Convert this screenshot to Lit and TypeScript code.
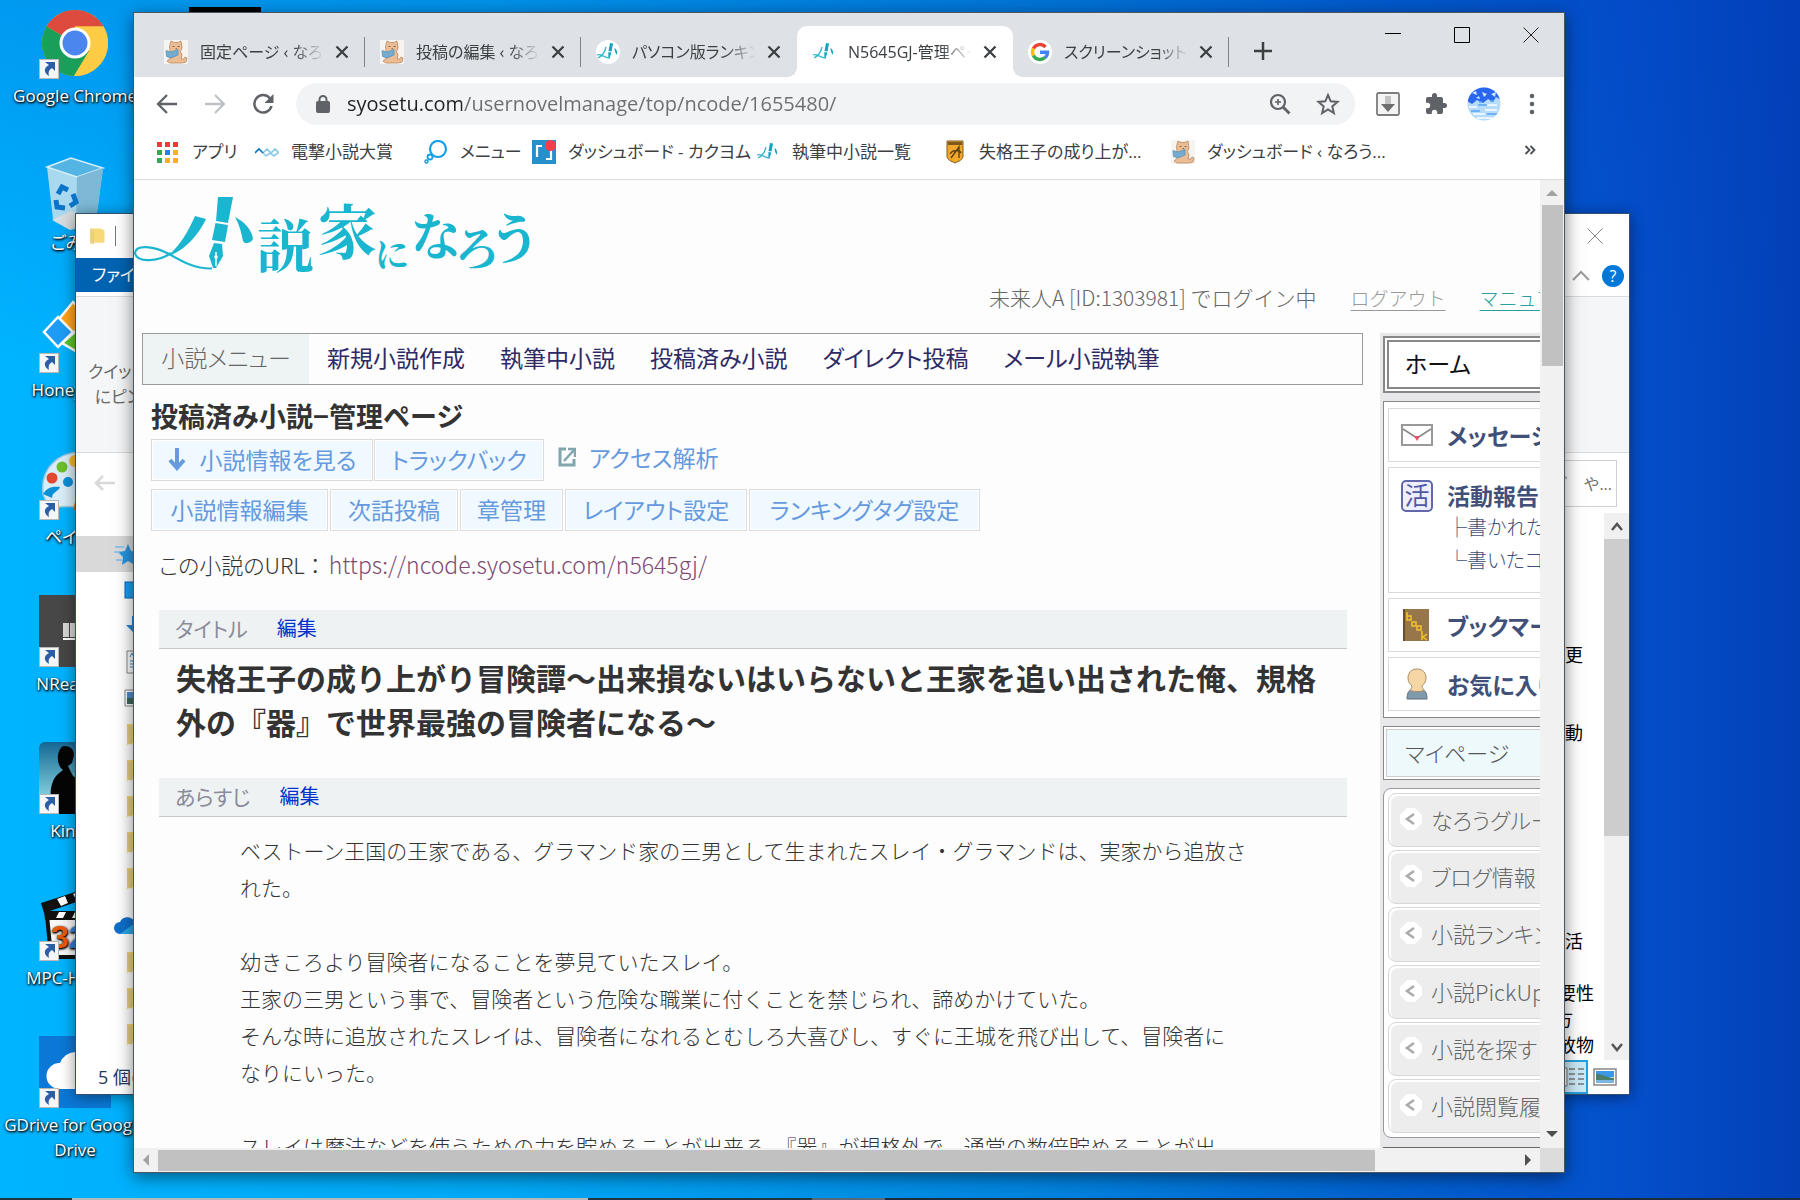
import { LitElement, html, svg, css } from "lit";
import { customElement } from "lit/decorators.js";

/* ---------- shared drawings ---------- */

const cat = () => html`<svg class="fav" viewBox="0 0 24 24" aria-hidden="true">
  <rect width="24" height="24" fill="#f6f4f1"/>
  <path d="M7 1l3 1.500h4L17 1l1 7-1.500 3.500L18 15l-1 4h3l1-2 2 1-1 4-4 1H6l-3-2 3-2.500-1-4 1-4-.5-4z" fill="#ebbd95" stroke="#b98862" stroke-width=".8"/>
  <path d="M8.500 6.500h2M13.500 6.500h2M11.500 8.500h1.500" stroke="#8a5c3c" stroke-width=".9"/>
  <path d="M2 10.500l5 1.500 7-2.500v5.500l-7 3-4.500-1.500z" fill="#76abd0" stroke="#4f8fbb" stroke-width=".7"/>
</svg>`;

const pen = (disc: boolean) => html`<svg class="fav" viewBox="0 0 24 24" aria-hidden="true">
  ${disc ? svg`<circle cx="12" cy="12" r="12" fill="#fff"/>` : ""}
  <path d="M14 3l3 .6-1.500 8-3-.5z" fill="#12a5bd"/><path d="M12.400 12l3 .5-1.300 4-1.700 2z" fill="#12a5bd"/>
  <path d="M10 7c-1 5-4 9-8 11M1 15c3-2 8 3 13 3" fill="none" stroke="#38b6c8" stroke-width="1.300"/>
  <path d="M18.500 8c2 1 3 3.500 2.500 7-1.500-2-2.500-4-2.500-7z" fill="#12a5bd"/>
</svg>`;

const google = () => html`<svg class="fav" viewBox="0 0 24 24" aria-hidden="true">
  <circle cx="12" cy="12" r="12" fill="#fff"/>
  <g fill="none" stroke-width="3.400"><path d="M5.400 8.500A7.500 7.500 0 0 1 17.500 7" stroke="#ea4335"/>
  <path d="M5.400 15.500a7.500 7.500 0 0 1 0-7" stroke="#fbbc05"/><path d="M17 17.600A7.500 7.500 0 0 1 5.400 15.500" stroke="#34a853"/>
  <path d="M12 12.200h7.500c0 2.300-1 4.200-2.500 5.400" stroke="#4285f4"/></g>
</svg>`;

const folder = () => html`<svg class="mini" viewBox="0 0 24 24" aria-hidden="true">
  <path d="M3 2h14l5 3v16H8l-5 2z" fill="#f8d978"/><path d="M3 2l5 3v18l-5-3z" fill="#e8cf85"/>
</svg>`;

const chromeLogo = svg`<circle cx="36" cy="36" r="33" fill="#fbc93d"/>
  <path d="M36 36L7.400 19.500A33 33 0 0 1 64.600 19.500H36z" fill="#dd4b3e"/>
  <path d="M36 36L7.400 19.500A33 33 0 0 0 35 69l15-25z" fill="#199f5a"/>
  <path d="M36 19.500h28.600A33 33 0 0 1 35 69l15.300-25z" fill="#fdcc44"/>
  <circle cx="36" cy="36" r="15.500" fill="#fff"/><circle cx="36" cy="36" r="12.500" fill="#4a86ee"/>`;

const binIcon = svg`<path d="M8 13l24-9 32 10-7 52-26 6-17-7z" fill="#a9d9ee"/>
  <path d="M8 13l24-9 32 10-26 9z" fill="#54b4e4" stroke="#d5eef8" stroke-width="1.500"/>
  <path d="M38 23l26-9-7 52-20 5z" fill="#7db9d6"/><path d="M13 66l19-9 26 8-1 5-26 6z" fill="#d8dde0"/>
  <g fill="none" stroke="#0a74c9" stroke-width="5"><path d="M19 40l4-7 6 3"/><path d="M34 40l3 8-6 4"/><path d="M26 54l-8-1-1-7"/></g>`;

const honey = svg`<g stroke="#fff" stroke-width="2.500"><path d="M34 1l17 17-17 17-14-17z" fill="#ffa21a"/>
  <path d="M19 16l15 15-15 15L5 31z" fill="#1e9cf5"/><path d="M37 30l14-14 14 15-15 27-27-16z" fill="#5cc42c"/></g>`;

const paint = svg`<path d="M4 46C1 20 20 4 42 4c18 0 28 14 28 28 0 18-14 28-32 27-16-1-14 0-20 0C8 58 6 52 4 46z" fill="#d9edf8" stroke="#9ec7de" stroke-width="1.500"/>
  <circle cx="13" cy="30" r="5.500" fill="#e2482f"/><circle cx="23" cy="19" r="5.500" fill="#6abf2d"/><circle cx="36" cy="13" r="6" fill="#f4b92c"/>
  <path d="M4 46c4-6 8-8 17-7-2 5-8 5-8 11" fill="#0b8fd8"/><circle cx="29" cy="34" r="5" fill="#0b8fd8"/><path d="M34 62l5-20 5 1-4 19z" fill="#c8742a"/>`;

const reader = svg`<rect width="72" height="72" fill="#474747"/><path d="M24 28h6v14h-6zM31 28h6v14h-6zM38 28h6v14h-6z" fill="#d8d8d8"/><path d="M24 43h26v2H24z" fill="#fff"/>`;

const kindle = svg`<defs><linearGradient id="kg" x1="0" y1="0" x2="0" y2="1"><stop offset="0" stop-color="#146793"/><stop offset="1" stop-color="#a6f0f4"/></linearGradient></defs>
  <rect width="72" height="72" rx="6" fill="url(#kg)"/>
  <path d="M25 4c7 0 10 4 10 9l-2 8-4 3 5 10 12 8 8-6 4 10-8 6v20H9l4-12c-3-8-1-22 6-28l5-4c-8-6-6-22 1-24z" fill="#050505"/>`;

const mpc = svg`<path d="M8 26h56v42H12z" fill="#f7f7f7" stroke="#111" stroke-width="4"/>
  <path d="M2 14L58-4l3 9L5 24z" fill="#111"/><path d="M5 22h60v9H6z" fill="#111"/>
  <path d="M18 10l8-3 3 7-7 3zM34 5l8-3 3 7-7 3zM20 23h7l-3 6h-7zM36 23h7l-3 6h-7z" fill="#fff"/>
  <text x="12" y="59" font-size="32" font-weight="bold" font-family="Liberation Sans, sans-serif" fill="#e8590c">3<tspan fill="#2f7fd6">2</tspan></text>`;

const gdrive = svg`<rect width="72" height="72" fill="#0b78d7"/>
  <path d="M20 52a13 13 0 0 1 1-26 17 17 0 0 1 31-2 14 14 0 0 1 4 28z" transform="translate(0 1)" fill="#fff"/><circle cx="46" cy="38" r="10" fill="#0b78d7"/>`;

const shortcuts = [
  { art: chromeLogo, label: "Google Chrome", link: true },
  { art: binIcon, label: "ごみ箱", link: false },
  { art: honey, label: "Honeyview", link: true },
  { art: paint, label: "ペイント", link: true },
  { art: reader, label: "NReaders", link: true },
  { art: kindle, label: "Kindle", link: true },
  { art: mpc, label: "MPC-HC x64", link: true },
  { art: gdrive, label: "GDrive for Google Drive", link: true },
];

/* ---------- file explorer ---------- */

@customElement("explorer-window")
export class ExplorerWindow extends LitElement {
  static styles = css`
    :host { display: flex; flex-direction: column; background: #fff; color: #000; box-sizing: border-box;
      border: 1px solid #35506e; box-shadow: 0 2px 14px rgba(0,0,0,.45); overflow: hidden;
      font: 18px/26px "Open Sans", "Noto Sans CJK JP", sans-serif; }
    button { border: 0; background: none; padding: 0; font: inherit; color: inherit; display: flex; align-items: center; justify-content: center; }
    .row { display: flex; align-items: center; flex: none; box-sizing: border-box; }
    .title { height: 44px; padding: 0 26px 0 12px; }
    .title .mini { width: 18px; height: 24px; }
    .bar { width: 1px; height: 20px; background: #777; margin-left: 9px; }
    .push { margin-left: auto; }
    .tabs { height: 39px; align-items: flex-start; border-bottom: 1px solid #d9dadb; padding-right: 5px; }
    .file { background: #0063b1; color: #fff; height: 34px; width: 90px; padding-left: 16px; justify-content: flex-start; font-size: 17px; font-feature-settings: "palt"; white-space: nowrap; }
    .tabs .push { display: flex; gap: 10px; padding-top: 7px; }
    .ribbon { height: 156px; background: #f5f6f7; border-bottom: 1px solid #d9dadb; color: #6a6a6a; font-size: 17px; line-height: 25px; box-sizing: border-box; padding: 62px 0 0 12px; font-feature-settings: "palt"; white-space: nowrap; flex: none; }
    .ribbon span { display: inline-block; text-align: center; }
    .address { height: 60px; padding: 0 12px 0 17px; }
    .search { width: 300px; height: 47px; box-sizing: border-box; border: 1px solid #d0d0d0; color: #6d6d6d; font: inherit; font-size: 16px; text-align: right; padding: 0 4px; }
    .body { flex: 1; display: flex; min-height: 0; }
    nav { width: 240px; padding-top: 23px; display: flex; flex-direction: column; overflow: hidden; }
    .item { height: 36px; display: flex; align-items: center; padding-left: 48px; flex: none; }
    .item.root { padding-left: 38px; }
    .item.on { background: #d9d9d9; }
    .item.gap { margin-top: 12px; }
    .mini { width: 24px; height: 24px; flex: none; }
    .files { flex: 1; display: flex; flex-direction: column; align-items: flex-end; overflow: hidden; padding-top: 129px; font-size: 18px; line-height: 26px; }
    .files p { margin: 0 21px 52px 0; }
    .files p.far { margin-bottom: 26px; margin-top: 130px; }
    .files p.tight { margin: 0 10px 0 0; }
    .files p.mid { margin: 0 31px 0 0; }
    .scroll { width: 25px; background: #f0f0f0; display: flex; flex-direction: column; align-items: center; }
    .scroll svg { width: 24px; height: 26px; flex: none; }
    .thumb { width: 100%; height: 297px; background: #cdcdcd; }
    .scroll svg:last-child { margin-top: auto; }
    .status { height: 34px; padding: 0 12px 0 22px; color: #1e395b; gap: 5px; }
    .view { width: 46px; height: 34px; box-sizing: border-box; border: 2px solid #26a0da; background: #cbe8f6; }
    .pic { width: 24px; height: 20px; }
  `;
  render() {
    return html`
      <div class="row title">${folder()}<span class="bar"></span>
        <button class="push" aria-label="閉じる"><svg width="16" height="16" viewBox="0 0 16 16"><path d="M.5.5l15 15M15.500.5l-15 15" stroke="#888" fill="none"/></svg></button></div>
      <div class="row tabs"><button class="file">ファイル</button>
        <div class="push"><button aria-label="リボンの最小化"><svg width="22" height="22" viewBox="0 0 22 22"><path d="M3 15l8-8 8 8" fill="none" stroke="#9a9a9a" stroke-width="2"/></svg></button>
        <button aria-label="ヘルプ"><svg width="22" height="22" viewBox="0 0 22 22"><circle cx="11" cy="11" r="11" fill="#0078d7"/><text x="11" y="17" fill="#fff" font-size="16" text-anchor="middle" font-family="Open Sans, sans-serif">?</text></svg></button></div></div>
      <div class="ribbon"><span>クイック アクセス<br>にピン留めする</span></div>
      <div class="row address"><button aria-label="戻る"><svg width="24" height="20" viewBox="0 0 24 20"><path d="M22 10H3M10 3l-7 7 7 7" fill="none" stroke="#d8d8d8" stroke-width="2.500"/></svg></button>
        <input class="search push" aria-label="検索" value="ブログ　や..."></div>
      <div class="body">
        <nav>
          <div class="item root on"><svg class="mini" viewBox="0 0 24 24"><path d="M14 2l3 7 7 1-5 5 2 8-7-4-6 4 1-8-5-5 7-1z" fill="#2795e0"/><path d="M1 5h9M0 10h6M2 18h6" stroke="#79bdf0" stroke-width="1.500"/></svg></div>
          <div class="item"><svg class="mini" viewBox="0 0 24 24"><rect x="1" y="4" width="22" height="16" fill="#1e9df2" stroke="#0b64b8"/></svg></div>
          <div class="item"><svg class="mini" viewBox="0 0 24 24"><path d="M8 2h7v9h7L12 21 2 11h6z" fill="#2c86d6"/></svg></div>
          <div class="item"><svg class="mini" viewBox="0 0 24 24"><path d="M3 1h18v22H3z" fill="#fff" stroke="#888"/><path d="M6 7l2-4 2 4M6 11h12M6 14h12M6 17h12" stroke="#3a8ed0" fill="none"/></svg></div>
          <div class="item"><svg class="mini" viewBox="0 0 24 24"><path d="M1 4h22v16H1z" fill="#fff" stroke="#888"/><path d="M3 6h18v6H3z" fill="#4c8fce"/><path d="M3 12h18v6H3z" fill="#3c6a5a"/></svg></div>
          ${[1, 2, 3, 4, 5].map(() => html`<div class="item">${folder()}</div>`)}
          <div class="item root gap"><svg class="mini" viewBox="0 0 24 24"><path d="M6 20a6 6 0 0 1 0-12 8 8 0 0 1 14-1l4 13z" fill="#0f6fca"/><path d="M6 20l12-9 6 2v7z" fill="#28a8ea"/></svg></div>
          ${[1, 2, 3].map(() => html`<div class="item">${folder()}</div>`)}
        </nav>
        <div class="files"><p>変更</p><p>移動</p><p class="far">活</p><p class="tight">重要性</p><p class="mid">方</p><p class="tight">放物</p></div>
        <div class="scroll" aria-hidden="true"><svg viewBox="0 0 24 26"><path d="M7 17l5-6 5 6" fill="none" stroke="#555" stroke-width="2.500"/></svg>
          <div class="thumb"></div><svg viewBox="0 0 24 26"><path d="M7 10l5 6 5-6" fill="none" stroke="#555" stroke-width="2.500"/></svg></div>
      </div>
      <div class="row status"><span>5 個の項目</span>
        <button class="view push" aria-label="詳細"><svg width="40" height="24" viewBox="0 0 40 24"><path d="M15 3h7v18h-7z" fill="#fff" stroke="#777"/><path d="M17 5h3v3h-3zM17 15h3v3h-3z" fill="#a44"/><path d="M24 4h6m3 0h6M24 9h6m3 0h6M24 14h6m3 0h6M24 19h6m3 0h6" stroke="#777" stroke-width="1.500"/></svg></button>
        <button aria-label="大アイコン"><svg class="pic" viewBox="0 0 24 20"><path d="M1 2h22v16H1z" fill="#fff" stroke="#888" stroke-width="1.500"/><path d="M3 4h18v6H3z" fill="#3e97e4"/><path d="M3 7c6 0 10 3 18 4v5H3z" fill="#4a7f6a"/><path d="M3 13h18v3H3z" fill="#7ab6e0"/></svg></button></div>
    `;
  }
}

/* ---------- web page shown in the browser ---------- */

const menu = ["新規小説作成", "執筆中小説", "投稿済み小説", "ダイレクト投稿", "メール小説執筆"];
const tools = ["小説情報編集", "次話投稿", "章管理", "レイアウト設定", "ランキングタグ設定"];
const links = ["なろうグループ", "ブログ情報", "小説ランキング", "小説PickUp!", "小説を探す", "小説閲覧履歴"];
const synopsis = [
  "ベストーン王国の王家である、グラマンド家の三男として生まれたスレイ・グラマンドは、実家から追放さ",
  "れた。",
  "",
  "幼きころより冒険者になることを夢見ていたスレイ。",
  "王家の三男という事で、冒険者という危険な職業に付くことを禁じられ、諦めかけていた。",
  "そんな時に追放されたスレイは、冒険者になれるとむしろ大喜びし、すぐに王城を飛び出して、冒険者に",
  "なりにいった。",
  "",
  "スレイは魔法などを使うための力を貯めることが出来る。『器』が規格外で、通常の数倍貯めることが出",
];

@customElement("novel-page")
export class NovelPage extends LitElement {
  static styles = css`
    :host { display: block; overflow: hidden; background: #fdfdfd; color: #333; font: 20px/30px "Noto Sans CJK JP", sans-serif; white-space: nowrap; }
    a { text-decoration: none; color: inherit; }
    .inner { width: calc(100% + 160px); }
    .top { height: 153px; display: flex; flex-direction: column; justify-content: space-between; }
    .logo { width: 400px; height: 100px; display: block; }
    .login { display: flex; justify-content: flex-end; align-items: baseline; gap: 34px; padding: 0 126px 20px 0; font-size: 19px; color: #666; font-weight: 300; }
    .login span { font-size: 21px; }
    .login a { text-decoration: underline; text-underline-offset: 4px; color: #999; }
    .login a.manual { color: #2a9d9d; }
    .cols { display: grid; grid-template-columns: minmax(0, 1fr) 320px; gap: 17px; padding-left: 8px; }
    .menu { display: flex; align-items: stretch; height: 52px; box-sizing: border-box; border: 1px solid #9a9a9a; font-size: 23px; font-feature-settings: "palt"; color: #2d2a66; }
    .menu b, .menu a { display: flex; align-items: center; padding-bottom: 4px; }
    .menu b { font-weight: 300; justify-content: center; width: 166px; background: #eef3f3; color: #666; }
    .menu a { padding-left: 18px; padding-right: 17px; }
    h1 { margin: 13px 0 5px 9px; font-size: 27px; line-height: 36px; font-weight: 700; }
    .btns { display: grid; grid-template-columns: 177px 128px 103px 182px 231px; gap: 2px; margin: 0 0 8px 9px; }
    .btns.first { grid-template-columns: 222px 170px auto; gap: 1px; justify-content: start; }
    .btns a { height: 42px; box-sizing: border-box; display: flex; align-items: center; justify-content: center; border: 1px solid #dcdcdc; background: #f0f9ff; box-shadow: inset 0 0 0 1px #fff; color: #6699dd; font-size: 23px; padding-bottom: 3px; font-feature-settings: "palt"; }
    .btns a.plain { border: 0; background: none; box-shadow: none; padding: 0 0 6px 13px; gap: 13px; }
    .btns a.see { gap: 14px; }
    .url { margin: 18px 0 31px 17px; display: flex; gap: 8px; font-weight: 300; font-size: 22px; }
    .url span { font-feature-settings: "palt"; }
    .url a { color: #7e4a72; font-size: 23px; }
    .head { margin: 0 16px 0 17px; height: 39px; box-sizing: border-box; background: #eef2f3; border-bottom: 1px solid #c8c8c8; display: flex; align-items: center; gap: 29px; padding: 0 0 2px 16px; }
    .head h2 { margin: 0; font-weight: 400; font-size: 21px; color: #8b8b9a; font-feature-settings: "palt"; }
    .head a { color: #0033cc; font-size: 20px; }
    .name { margin: 6px 0 35px 34px; font-size: 30px; line-height: 44px; font-weight: 700; }
    .text { margin: 15px 0 0 98px; font-size: 21px; line-height: 37px; font-weight: 300; }
    .text p { margin: 0; min-height: 37px; }
    aside { background: #e8e8ea; padding: 3px 0 0 3px; box-sizing: border-box; font-feature-settings: "palt"; height: 900px; }
    .home { display: flex; align-items: center; height: 57px; box-sizing: border-box; border: 6px double #888; background: #fff; padding: 0 0 3px 16px; font-size: 23px; color: #111; }
    .box { margin-top: 8px; border: 1px solid #888; background: #fff; padding: 6px 4px; display: flex; flex-direction: column; gap: 5px; height: 317px; box-sizing: border-box; }
    .card { border: 1px solid #dadada; height: 54px; box-sizing: border-box; padding: 0 12px; display: flex; align-items: center; gap: 14px; font-size: 23px; font-weight: 700; color: #405078; flex: none; }
    .card svg { width: 32px; height: 32px; flex: none; }
    .card.tall { height: 126px; align-items: flex-start; padding-top: 12px; }
    .card.tall a { display: block; }
    .card.tall small { display: block; font-size: 20px; line-height: 33px; font-weight: 300; }
    .my { margin-top: 8px; border: 1px solid #888; background: #fff; padding: 2px; height: 54px; box-sizing: border-box; }
    .my a { display: flex; align-items: center; height: 48px; box-sizing: border-box; border: 1px solid #ccc; background: #eef9fb; padding: 0 0 3px 18px; font-size: 22px; font-weight: 300; color: #555; }
    .group { margin-top: 8px; border: 1px solid #999; border-radius: 8px; background: #fff; padding: 4px; display: flex; flex-direction: column; gap: 3px; height: 350px; box-sizing: border-box; }
    .group a { flex: 1; display: flex; align-items: center; gap: 9px; padding: 0 0 2px 11px; border: 1px solid #d8d8d8; border-radius: 8px; background: #ededed; box-shadow: inset 2px 2px 1px #fff; font-size: 22px; font-weight: 300; color: #666; }
    .group svg { width: 22px; height: 22px; flex: none; }
    .next { margin-top: 9px; height: 60px; border-top: 1px solid #666; }
  `;
  render() {
    return html`<div class="inner">
      <header class="top">
        <svg class="logo" viewBox="0 0 400 100" role="img" aria-label="小説家になろう">
          <g fill="#1ab6cf"><path d="M84 17h15l-5 26-12-2z"/><path d="M81.500 43l12.500 2-3 17-13-2z"/><path d="M80 63l8 1 1 12-7 12h-3l-4-12z"/>
          <path d="M101 37c8 4 17 12 18 22-2 4-8 6-10 2-2-10-4-17-8-24z"/><path d="M61 36l11 3c-8 17-22 32-38 37 13-12 20-24 27-40z"/></g>
          <path d="M37 73C26 81 3 84 1 73 2 64 20 66 35 74c14 8 26 15 43 14.500" fill="none" stroke="#1ab6cf" stroke-width="2.200"/>
          <path d="M82 72v14" stroke="#fdfdfd" stroke-width="1.500"/><circle cx="82" cy="77" r="1.800" fill="#fdfdfd"/>
          <g fill="#1ab6cf" font-family="Noto Serif CJK JP, Noto Sans CJK JP, sans-serif" font-weight="700"><text x="123" y="87" font-size="57">説</text><text x="184" y="74" font-size="59">家</text><text x="241" y="87" font-size="34">に</text><text x="277" y="75" font-size="50">な</text><text x="320" y="85" font-size="46">ろ</text><text x="354" y="79" font-size="54">う</text></g>
        </svg>
        <div class="login"><span>未来人A [ID:1303981] でログイン中</span><a href="#">ログアウト</a><a class="manual" href="#">マニュアル</a></div>
      </header>
      <div class="cols">
        <main>
          <nav class="menu"><b>小説メニュー</b>${menu.map((m) => html`<a href="#">${m}</a>`)}</nav>
          <h1>投稿済み小説−管理ページ</h1>
          <div class="btns first">
            <a class="see" href="#"><svg width="18" height="24" viewBox="0 0 18 24"><path d="M9 1v20M2 13l7 8 7-8" fill="none" stroke="#6699dd" stroke-width="4"/></svg>小説情報を見る</a>
            <a href="#">トラックバック</a>
            <a class="plain" href="#"><svg width="18" height="20" viewBox="0 0 18 20"><path d="M8 2H2v16h14v-6" fill="none" stroke="#82a5ae" stroke-width="3"/><path d="M6 14L16 3M10 2h7v8" fill="none" stroke="#82a5ae" stroke-width="2.500"/></svg>アクセス解析</a>
          </div>
          <div class="btns">${tools.map((t) => html`<a href="#">${t}</a>`)}</div>
          <div class="url"><span>この小説のURL ：</span><a href="#">https://ncode.syosetu.com/n5645gj/</a></div>
          <div class="head"><h2>タイトル</h2><a href="#">編集</a></div>
          <div class="name">失格王子の成り上がり冒険譚～出来損ないはいらないと王家を追い出された俺、規格<br>外の『器』で世界最強の冒険者になる～</div>
          <div class="head"><h2>あらすじ</h2><a href="#">編集</a></div>
          <div class="text">${synopsis.map((s) => html`<p>${s}</p>`)}</div>
        </main>
        <aside>
          <a class="home" href="#">ホーム</a>
          <div class="box">
            <a class="card" href="#"><svg viewBox="0 0 32 32"><path d="M1 6h30v20H1z" fill="#fff" stroke="#999" stroke-width="2"/><path d="M2 10l14 9 14-9" fill="none" stroke="#888" stroke-width="1.500"/><path d="M13 17h6l-3 5z" fill="#e2556a"/></svg>メッセージ</a>
            <div class="card tall"><svg viewBox="0 0 32 32"><rect x="1" y="1" width="30" height="30" rx="4" fill="#eef" stroke="#6268ab" stroke-width="2"/><text x="16" y="25" text-anchor="middle" font-size="25" font-weight="400" fill="#5058a0">活</text></svg>
              <div><a href="#">活動報告</a><small><a href="#">├書かれたコメント</a><a href="#">└書いたコメント</a></small></div></div>
            <a class="card" href="#"><svg viewBox="0 0 32 32"><path d="M2 0h26v32H2z" fill="#96764a"/><path d="M2 0h2v32H2z" fill="#6b4d28"/><g fill="none" stroke="#f5c22c" stroke-width="1.500"><path d="M6 3v8h4V7H6M11 13h4v4h-4zM16 17h4v4h-4zM21 22v9M26 25l-4 3 4 3"/></g></svg>ブックマーク</a>
            <a class="card" href="#"><svg viewBox="0 0 32 32"><path d="M6 31c0-5 1-8 5-10h10c4 2 5 5 5 10z" fill="#7f9aac" stroke="#5f6e78"/><path d="M16 1c6 0 9 4 9 9 0 4-2 6-4 8 0 3 2 3 2 4-2 2-12 2-14 0 0-1 2-1 2-4-2-2-4-4-4-8 0-5 3-9 9-9z" fill="#f5d6a4" stroke="#a98f66"/></svg>お気に入り</a>
          </div>
          <div class="my"><a href="#">マイページ</a></div>
          <div class="group">${links.map((l) => html`<a href="#"><svg viewBox="0 0 22 22"><path d="M7 0h8l7 7v8l-7 7H7l-7-7V7z" fill="#fff"/><path d="M14 6l-7 5 7 5" fill="none" stroke="#aaa" stroke-width="2.500"/></svg>${l}</a>`)}</div>
          <div class="next"></div>
        </aside>
      </div>
    </div>`;
  }
}

/* ---------- browser window ---------- */

const tabs = [
  { icon: cat, title: "固定ページ ‹ なろう系" },
  { icon: cat, title: "投稿の編集 ‹ なろう" },
  { icon: () => pen(true), title: "パソコン版ランキング" },
  { icon: () => pen(false), title: "N5645GJ-管理ページ", active: true },
  { icon: google, title: "スクリーンショット" },
];

const apps = ["#f03a37", "#f03a37", "#f03a37", "#34a853", "#2d7df0", "#f9b21a", "#34a853", "#f9b21a", "#f9b21a"];
const marks = [
  { title: "アプリ", icon: () => html`<svg class="fav" viewBox="0 0 24 24">${apps.map((c, i) => svg`<rect x=${1 + (i % 3) * 8} y=${2 + Math.floor(i / 3) * 8} width="5" height="5" fill=${c}/>`)}</svg>` },
  { title: "電撃小説大賞", icon: () => html`<svg class="fav" viewBox="0 0 24 24"><g fill="none" stroke-width="1.600"><path d="M8 13l4-4 4 4 4-4 4 4M8 13l3 3 4-3 4 3 4-3" stroke="#8cc9ea"/><path d="M0 13l4-4 4 4" stroke="#0a6fb8"/></g></svg>` },
  { title: "メニュー", icon: () => html`<svg class="fav" viewBox="0 0 24 24"><g fill="none" stroke="#159fe6"><circle cx="14" cy="9" r="8" stroke-width="2.200"/><circle cx="6" cy="17" r="2.500" stroke-width="1.800"/><circle cx="2.500" cy="21.500" r="1.500" stroke-width="1.500"/></g></svg>` },
  { title: "ダッシュボード - カクヨム", icon: () => html`<svg class="fav" viewBox="0 0 24 24"><path d="M0 0h24v24H0z" fill="#2590cc"/><path d="M5 17V6h5M19 8v11h-5" fill="none" stroke="#fff" stroke-width="2.200"/><circle cx="18.500" cy="5.500" r="5.500" fill="#fa3c4c"/></svg>` },
  { title: "執筆中小説一覧", icon: () => pen(false) },
  { title: "失格王子の成り上が...", icon: () => html`<svg class="fav" viewBox="0 0 24 24"><path d="M4 1h16v15c0 4-4 5-8 7-4-2-8-3-8-7z" fill="#f0a92b" stroke="#7c5a1c"/><path d="M5 2h14v3H5z" fill="#7c5a1c"/><path d="M8 18l8-11v11M7 14c3-5 10-4 11-1" fill="none" stroke="#5b4213" stroke-width="1.400"/></svg>` },
  { title: "ダッシュボード ‹ なろう...", icon: cat },
];

@customElement("browser-window")
export class BrowserWindow extends LitElement {
  static styles = css`
    :host { display: flex; flex-direction: column; background: #fff; box-sizing: border-box; border: 1px solid #4a5763; box-shadow: 0 4px 16px rgba(0,0,0,.5);
      font: 17px/24px "Open Sans", "Noto Sans CJK JP", sans-serif; color: #3c4043; font-feature-settings: "palt"; white-space: nowrap; overflow: hidden; }
    button { border: 0; background: none; padding: 0; font: inherit; color: inherit; display: flex; align-items: center; justify-content: center; }
    .fav { width: 24px; height: 24px; flex: none; }
    .strip { height: 64px; flex: none; background: #dee1e6; display: flex; align-items: flex-end; padding-left: 15px; }
    .tab { width: 216px; height: 51px; box-sizing: border-box; display: flex; align-items: center; padding: 0 16px 0 15px; border-radius: 10px 10px 0 0; position: relative; flex: none; }
    .tab:not(.on):not(.before)::after { content: ""; position: absolute; right: 0; top: 11px; width: 1px; height: 30px; background: #808387; }
    .tab.on { background: #fff; }
    .tab.on::before, .tab.on::after { content: ""; position: absolute; bottom: 0; width: 10px; height: 10px; }
    .tab.on::before { left: -10px; background: radial-gradient(circle at 0 0, transparent 10px, #fff 10px); }
    .tab.on::after { right: -10px; background: radial-gradient(circle at 100% 0, transparent 10px, #fff 10px); }
    .tab span { flex: 1; margin: 0 11px 0 12px; overflow: hidden; font-size: 16px; mask-image: linear-gradient(to right, #000 75%, transparent); }
    .new { margin: 0 0 14px 24px; }
    .win { margin: 0 25px 0 auto; align-self: flex-start; padding-top: 14px; display: flex; gap: 53px; }
    .bar { height: 54px; flex: none; display: flex; align-items: center; padding: 0 20px 0 21px; }
    .bar .nav { width: 24px; height: 24px; margin-right: 24px; }
    .omni { flex: 1; height: 42px; margin: 0 21px 0 -3px; border-radius: 21px; background: #f1f3f4; display: flex; align-items: center; padding: 0 15px 0 18px; gap: 25px; }
    .omni input { flex: 1; min-width: 0; border: 0; outline: 0; padding: 0; font: 20px/28px "Open Sans", sans-serif; margin-left: -10px;
      background: linear-gradient(to right, #202124 115px, #6a6d71 115px); -webkit-background-clip: text; background-clip: text; color: transparent; }
    .ext { display: flex; gap: 24px; align-items: center; }
    .ext button { width: 24px; }
    .ext svg { flex: none; }
    .marks { height: 49px; flex: none; display: grid; grid-template-columns: 99px 169px 108px 224px 187px 228px 1fr 24px; align-items: start; padding: 9px 22px 0 22px; box-sizing: border-box; border-bottom: 1px solid #dadce0; }
    .marks a { display: flex; align-items: center; gap: 12px; color: inherit; text-decoration: none; }
    .view { flex: 1; min-height: 0; display: grid; grid-template-columns: minmax(0, 1fr) 24px; grid-template-rows: minmax(0, 1fr) 24px; background: #f1f1f1; }
    .v, .h { display: flex; align-items: center; }
    .v { flex-direction: column; }
    .v i { width: 21px; height: 161px; background: #c1c1c1; }
    .h i { width: 1217px; height: 21px; background: #c1c1c1; }
    .v svg:last-child { margin-top: auto; }
    .h svg:last-child { margin-left: auto; }
    .corner { background: #dcdcdc; }
  `;
  render() {
    return html`
      <div class="strip">
        ${tabs.map((t, i) => html`<div class="tab ${t.active ? "on" : tabs[i + 1]?.active ? "before" : ""}">${t.icon()}<span>${t.title}</span>
          <button aria-label="タブを閉じる"><svg width="14" height="14" viewBox="0 0 14 14"><path d="M1.500 1.500l11 11M12.500 1.500l-11 11" stroke="#3c4043" stroke-width="2.300"/></svg></button></div>`)}
        <button class="new" aria-label="新しいタブ"><svg width="20" height="24" viewBox="0 0 20 24"><path d="M10 3v18M1 12h18" stroke="#3c4043" stroke-width="2.500"/></svg></button>
        <div class="win">
          <button aria-label="最小化"><svg width="16" height="16" viewBox="0 0 16 16"><path d="M0 6.500h16" stroke="#000"/></svg></button>
          <button aria-label="最大化"><svg width="16" height="16" viewBox="0 0 16 16"><path d="M.5.5h15v15H.5z" fill="none" stroke="#000"/></svg></button>
          <button aria-label="閉じる"><svg width="16" height="16" viewBox="0 0 16 16"><path d="M.5.5l15 15M15.500.5l-15 15" stroke="#222"/></svg></button>
        </div>
      </div>
      <div class="bar">
        <button class="nav" aria-label="戻る"><svg width="24" height="24" viewBox="0 0 24 24"><path d="M22 12H4M12 3l-9 9 9 9" fill="none" stroke="#5f6368" stroke-width="2.300"/></svg></button>
        <button class="nav" aria-label="進む"><svg width="24" height="24" viewBox="0 0 24 24"><path d="M2 12h19M12 3l9 9-9 9" fill="none" stroke="#bdc1c6" stroke-width="2.300"/></svg></button>
        <button class="nav" aria-label="再読み込み"><svg width="24" height="24" viewBox="0 0 24 24"><path d="M19 6.500A8.700 8.700 0 1 0 20.500 14" fill="none" stroke="#5f6368" stroke-width="2.500"/><path d="M22.500 2v9h-9z" fill="#5f6368"/></svg></button>
        <div class="omni">
          <svg width="18" height="20" viewBox="0 0 18 20"><path d="M4 7h10a2 2 0 0 1 2 2v8a2 2 0 0 1-2 2H4a2 2 0 0 1-2-2V9a2 2 0 0 1 2-2z" fill="#5f6368"/><path d="M5.500 8V5.500a3.500 3.500 0 0 1 7 0V8" fill="none" stroke="#5f6368" stroke-width="2"/></svg>
          <input aria-label="アドレス" value="syosetu.com/usernovelmanage/top/ncode/1655480/">
          <button aria-label="ズーム"><svg width="22" height="22" viewBox="0 0 22 22"><circle cx="9" cy="9" r="7" fill="none" stroke="#5f6368" stroke-width="2.200"/><path d="M14 14l6.500 6.500" stroke="#5f6368" stroke-width="2.800"/><path d="M9 6v6M6 9h6" stroke="#5f6368" stroke-width="1.600"/></svg></button>
          <button aria-label="ブックマーク"><svg width="24" height="24" viewBox="0 0 24 24"><path d="M12 3l2.700 6.300 6.800.6-5.200 4.500 1.600 6.700-5.900-3.600-5.900 3.600 1.600-6.700L2.500 9.900l6.800-.6z" fill="none" stroke="#5f6368" stroke-width="2"/></svg></button>
        </div>
        <div class="ext">
          <button aria-label="ダウンロード"><svg width="24" height="24" viewBox="0 0 24 24"><rect x="1" y="1" width="22" height="22" rx="1.500" fill="#f4f4f4" stroke="#7d7d7d" stroke-width="1.800"/><path d="M9 4h6v9H9z" fill="#c3c3c3"/><path d="M5 12h14l-7 8z" fill="#6d6d6d"/></svg></button>
          <button aria-label="拡張機能"><svg width="24" height="24" viewBox="0 0 24 24"><path d="M20.500 11H19V7a2 2 0 0 0-2-2h-4V3.500a2.500 2.500 0 0 0-5 0V5H4a2 2 0 0 0-2 2v3.800h1.500a2.700 2.700 0 0 1 0 5.400H2V20a2 2 0 0 0 2 2h3.800v-1.500a2.700 2.700 0 0 1 5.400 0V22H17a2 2 0 0 0 2-2v-4h1.500a2.500 2.500 0 0 0 0-5z" fill="#5f6368"/></svg></button>
          <button aria-label="プロフィール"><svg width="34" height="34" viewBox="0 0 34 34"><clipPath id="av"><circle cx="17" cy="17" r="16.500"/></clipPath><g clip-path="url(#av)"><path d="M0 0h34v34H0z" fill="#b5dcfb"/><path d="M0 0h34v13l-5-3-3 5-5-3-5 4-6-3-5 4-5-3z" fill="#2b66f2"/><path d="M5 6l4-2 1 4zM15 5l5 2-3 3zM24 7l5-2-1 5zM9 11l3-2 1 3z" fill="#cfe7fd"/><path d="M2 20h8M20 18h10M6 27h12M18 23h12M10 31h16" stroke="#e9f5ff" stroke-width="2"/><path d="M11 18h9M4 24h9M20 27h10M12 15h3M23 14h4" stroke="#58a5f5" stroke-width="1.500"/></g></svg></button>
          <button aria-label="メニュー"><svg width="24" height="24" viewBox="0 0 24 24"><g fill="#5f6368"><circle cx="12" cy="4" r="2.300"/><circle cx="12" cy="12" r="2.300"/><circle cx="12" cy="20" r="2.300"/></g></svg></button>
        </div>
      </div>
      <div class="marks">${marks.map((m) => html`<a href="#">${m.icon()}<span>${m.title}</span></a>`)}<button aria-label="その他のブックマーク"><svg width="12" height="22" viewBox="0 0 12 22"><path d="M1.500 6l4 4-4 4M6.500 6l4 4-4 4" fill="none" stroke="#4a4d51" stroke-width="1.800"/></svg></button></div>
      <div class="view">
        <novel-page></novel-page>
        <div class="v" aria-hidden="true"><svg width="24" height="25" viewBox="0 0 24 25"><path d="M6 16h12l-6-6z" fill="#a3a3a3"/></svg><i></i><svg width="24" height="25" viewBox="0 0 24 25"><path d="M6 8h12l-6 6z" fill="#505050"/></svg></div>
        <div class="h" aria-hidden="true"><svg width="24" height="24" viewBox="0 0 24 24"><path d="M15 6v12l-6-6z" fill="#a3a3a3"/></svg><i></i><svg width="24" height="24" viewBox="0 0 24 24"><path d="M9 6v12l6-6z" fill="#505050"/></svg></div>
        <div class="corner"></div>
      </div>
    `;
  }
}

/* ---------- desktop ---------- */

@customElement("app-root")
export class AppRoot extends LitElement {
  static styles = css`
    :host { display: flex; flex-direction: column; justify-content: space-between; height: 100vh; position: relative; overflow: hidden;
      background: linear-gradient(to bottom, rgba(0,60,190,.22), transparent 30%), linear-gradient(to right, #00b4ff 0%, #00a8f5 28%, #0083de 58%, #0062cf 76%, #0450cc 90%, #0340b6 100%); }
    .icons { list-style: none; margin: 0; padding: 7px 0 0; width: 150px; }
    .icons li { height: 147px; }
    .icons a { display: flex; flex-direction: column; align-items: center; gap: 4px; color: #fff; text-decoration: none; text-align: center; font: 17px/25px "Open Sans", "Noto Sans CJK JP", sans-serif; text-shadow: 1px 1px 2px #000, 0 1px 3px #000; font-feature-settings: "palt"; }
    .icons svg { width: 72px; height: 72px; overflow: visible; }
    explorer-window { position: absolute; left: 75px; right: 170px; top: 213px; bottom: 105px; }
    browser-window { position: absolute; left: 133px; right: 235px; top: 12px; bottom: 27px; }
    .notch { position: absolute; left: 189px; top: 7px; width: 72px; height: 6px; background: #000; }
    .taskbar { position: absolute; left: 0; right: 0; bottom: 0; height: 2px; background: linear-gradient(to right, #1f3542 72px, #b4b8ba 72px, #b4b8ba 588px, #1f3542 588px, #1f3542 812px, #56697a 812px, #56697a 885px, #1b2c3f 885px); }
  `;
  render() {
    return html`
      <ul class="icons">${shortcuts.map((s) => html`<li><a href="#"><svg viewBox="0 0 72 72" aria-hidden="true">${s.art}
        ${s.link ? svg`<rect x="0.500" y="52.500" width="19" height="19" fill="#f4f6f8" stroke="#b8b8b8"/><path d="M6 55h10v9l-3-3c-3 2-4 4-3 8-5-3-6-8 0-11z" fill="#2b5fa5"/>` : ""}</svg>${s.label}</a></li>`)}</ul>
      <div class="notch"></div>
      <explorer-window></explorer-window>
      <browser-window></browser-window>
      <div class="taskbar"></div>
    `;
  }
}
